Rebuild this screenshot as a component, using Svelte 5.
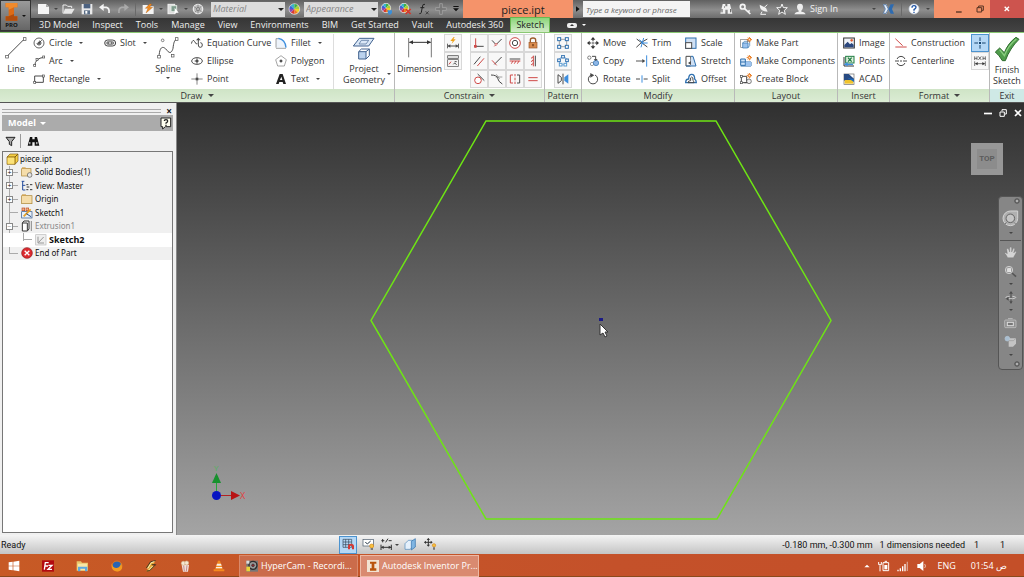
<script>
  // Every glyph is drawn on a grid of three units per pixel.
  const G = '#4a4a4a';
  const s = (d, c = G, w = 3) => `<path d="${d}" fill="none" stroke="${c}" stroke-width="${w}"/>`;
  const f = (d, c) => `<path d="${d}" fill="${c}"/>`;
  const box = (x, y, w, h, fill = '#fff', c = G, sw = 2) =>
    `<rect x="${x}" y="${y}" width="${w}" height="${h}" fill="${fill}" stroke="${c}" stroke-width="${sw}"/>`;
  const dot = (x, y, r, fill = '#fff', c = G, w = 2) =>
    `<circle cx="${x}" cy="${y}" r="${r}" fill="${fill}" stroke="${c}" stroke-width="${w}"/>`;
  const spark = (x, y) =>
    s(`M${x} ${y - 8}v16M${x - 8} ${y}h16M${x - 5} ${y - 5}l10 10M${x + 5} ${y - 5}l-10 10`, '#e8791c', 3) + dot(x, y, 3, '#fff', '#e8791c');
  const wheel = (x, y, r) => {
    const colors = ['#f0d020', '#ef7d1e', '#d83a32', '#8a4cb4', '#3b62d8', '#36b3c8', '#3fae49', '#a5cf3a'];
    return dot(x, y, r + 1, '#fff', '#ddd', 2) + colors.map((c, i) => {
      const a = (i * Math.PI) / 4, b = a + Math.PI / 4;
      return f(`M${x} ${y}L${x + r * Math.cos(a)} ${y + r * Math.sin(a)}A${r} ${r} 0 0 1 ${x + r * Math.cos(b)} ${y + r * Math.sin(b)}Z`, c);
    }).join('');
  };
  const R = '#cf4a48', B = '#2e6fae', L = '#cfe0f4';

  const icons = {
    line: [22, 22, s('M7 57L57 7', G, 3) + box(2, 55, 8, 8) + box(55, 2, 8, 8)],
    circle: [12, 12, dot(18, 18, 15, '#fff', '#666', 3) + s('M18 18l8-8M12 18a6 6 0 1 0 6-6') + dot(18, 18, 3, G)],
    arc: [12, 12, s('M5 32Q7 10 32 7', G, 3) + box(2, 28, 6, 6) + box(29, 3, 6, 6) + box(9, 10, 6, 6)],
    rect: [12, 12, s('M5 9h26v19H5z') + box(2, 25, 6, 6) + box(28, 6, 6, 6)],
    slot: [12, 12, `<rect x="2" y="9" width="33" height="18" rx="9" fill="#eee" stroke="${G}" stroke-width="3"/><rect x="8" y="14" width="21" height="8" rx="4" fill="#fff" stroke="${G}" stroke-width="2"/>` + f('M10 16h6v4h-6zM20 16h6v4h-6z', G)],
    spline: [22, 22, s('M6 60C8 18 24 32 30 40C40 54 46 42 48 34C50 16 52 12 58 6', G, 3) + box(2, 55, 8, 8) + box(55, 2, 8, 8) + dot(17, 10, 4) + box(43, 52, 8, 8)],
    equation: [12, 12, s('M1 20Q6 4 11 14T19 20M22 8v16q0 7 6 7t6-7q0-7-6-7') + f('M15 10l7-8 7 8z', G)],
    ellipse: [12, 12, `<ellipse cx="18" cy="18" rx="16" ry="10" fill="none" stroke="${G}" stroke-width="3"/>` + s('M18 10v16M11 18h12') + dot(18, 18, 3, G)],
    point: [12, 12, s('M18 1v34M1 18h34', G, 2) + f('M14 14h8v8h-8z', G)],
    fillet: [12, 12, f('M3 4h10q18 4 20 28H3z', '#eef4fb') + s('M3 32V5h8M3 34h30', '#777', 2) + s('M10 4Q31 7 33 32', '#3d8ede', 4)],
    polygon: [12, 12, s('M18 2l16 12-6 19H8L2 14z', '#777', 2) + s('M18 14v8M14 18h8') + dot(18, 18, 3, G)],
    text: [12, 12, f('M3 33L14 3h9l10 30h-8l-2-6H13l-2 6zM15 21h7l-3-10z', '#222')],
    project: [24, 24, f('M22 4h44L50 27H4z', '#dbe8f7') + s('M22 4h44L50 27H4z', '#42638f') + s('M28 10h22l-8 11H21z', '#42638f', 2) + f('M20 44h22v22H20z', '#bcd3ee') + s('M20 44l8-8h24v20l-10 10H20zM20 44h22v22M42 44l10-8', '#42638f')],
    dimension: [24, 22, s('M2 3v58M70 3v58', '#333', 2) + s('M4 16h64', '#333', 3) + f('M3 16l12-6v12zM69 16l-12-6v12z', '#333')],
    autodim: [12, 12, f('M20 0L10 12h7l-3 8 12-13h-7l4-7z', '#efa31b') + s('M1 20v14M35 20v14M3 27h30') + f('M2 27l8-5v10zM34 27l-8-5v10z', G)],
    showcons: [12, 12, box(2, 2, 32, 8, '#ddd') + box(2, 14, 32, 20, '#f4f4f4') + s('M12 20l-6 8', R) + s('M19 28l4-4 6 5M23 20l6 0') ],
    coincident: [12, 12, s('M8 4v28', R) + s('M8 28h24', G) + f('M3 24h8v8H3z', R)],
    collinear: [12, 12, s('M3 10l12 13L32 6') + s('M10 28l8-8', R) + dot(15, 22, 3, '#fff', R)],
    concentric: [12, 12, dot(18, 18, 16, '#fff', R, 3) + dot(18, 18, 8, '#fff', G, 3)],
    lock: [12, 12, s('M10 17V9q0-6 8-6t8 6v8', '#9b5a2a', 4) + box(6, 16, 24, 17, '#d98b4e', '#9b5a2a') + f('M16 21h4v7h-4z', '#6b3a15')],
    parallel: [12, 12, s('M3 28L22 5') + s('M13 33L33 10', R)],
    perpendicular: [12, 12, s('M10 28L32 6') + s('M3 16l14 15', R)],
    horizontal: [12, 12, s('M2 12h32') + s('M2 18h32M7 26l5-8M16 26l5-8M25 26l5-8', R)],
    vertical: [12, 12, s('M25 2v32') + s('M19 2v32M12 10l7-5M12 20l7-5M12 30l7-5', R)],
    tangent: [12, 12, dot(15, 22, 10, '#fff', R, 3) + s('M14 3l20 20')],
    smooth: [12, 12, s('M0 6Q18 6 20 16T34 33') + s('M14 12h20M16 4l10 14', '#777', 2)],
    symmetric: [12, 12, s('M12 6H4v24h8', R) + s('M18 3v7M18 14v8M18 26v7', R) + s('M24 6h8v24h-8')],
    equal: [12, 12, s('M4 14h28M4 23h28', R)],
    patrect: [12, 12, s('M7 7h22v22H7z', '#777', 2) + box(2, 2, 9, 9, '#fff', B, 3) + box(25, 2, 9, 9, '#fff', B, 3) + box(2, 25, 9, 9, '#fff', B, 3) + box(25, 25, 9, 9, '#fff', B, 3)],
    patcirc: [12, 12, dot(18, 18, 12, 'none', '#8db6e6', 3) + box(14, 1, 8, 8, '#fff', B, 3) + box(2, 12, 8, 8, '#fff', B, 3) + box(26, 12, 8, 8, '#fff', B, 3) + box(7, 25, 8, 8, '#fff', '#5b9bd0', 3) + box(21, 25, 8, 8, '#fff', '#5b9bd0', 3)],
    mirror: [12, 12, s('M3 5v26l10-8V13zM18 2v32', G) + f('M34 4v28l-12-9V13z', '#3d8ede')],
    move: [12, 12, s('M18 4v28M4 18h28', '#333') + f('M18 0l7 8H11zM18 36l7-8H11zM0 18l8-7v14zM36 18l-8-7v14z', '#333') + f('M13 13h10v10H13z', '#fff') + f('M16 16h4v4h-4z', '#333')],
    copy: [12, 12, dot(7, 8, 5, '#fff') + dot(15, 27, 5, '#fff', '#777') + dot(27, 24, 8, '#8db6e6', B) + s('M15 4h11v10') + f('M20 12h12l-6 6z', G)],
    rotate: [12, 12, s('M12 6A14 14 0 1 0 24 6') + f('M10 0l12 7-12 7z', G)],
    trim: [12, 12, s('M1 31L18 15l16-9M2 6l32 24') + s('M23 3l-8 28M10 8l14 12', '#3d8ede') + s('M15 18h20', '#3d8ede')],
    extend: [12, 12, s('M0 18h22', '#555') + f('M19 12l9 6-9 6z', G) + s('M32 1v34', '#3d8ede')],
    split: [12, 12, s('M0 18h12M23 18h12') + s('M18 7v22', '#3d8ede')],
    scale: [12, 12, box(2, 3, 31, 31, L, B, 3) + box(2, 17, 18, 17, '#fff', G, 3)],
    stretch: [12, 12, s('M3 4h14v29H3z', G) + f('M18 4h6l9 29H15z', L) + s('M18 4h6l9 29H3', B) + f('M9 24l9-6v12z', G)],
    offset: [12, 12, s('M2 29q0-11 9-11Q11 4 20 4t9 14q5 3 5 11z', B, 4) + s('M9 29q0-6 8-6-2-11 3-11t4 11q3 1 3 6z', G)],
    part: [12, 12, box(2, 7, 20, 24, '#fff', '#777') + f('M8 17h17v16H8z', '#9cc3ef') + s('M8 18l5-5h16v13l-6 7H8zM8 18h16v14', B, 2) + spark(28, 8)],
    components: [12, 12, f('M2 12h14v18H2z', '#cfe4f9') + s('M2 12h14v19H2zM2 21h31v12H2M17 21v12', B) + f('M17 21h16v12H17z', '#9cc3ef') + spark(28, 8)],
    block: [12, 12, s('M4 10h16v19H4z') + box(1, 26, 6, 6) + box(1, 7, 6, 6) + dot(27, 25, 7, '#eee') + s('M13 29h9') + spark(28, 8)],
    image: [12, 12, box(2, 3, 32, 30, '#eef2f8', '#333', 3) + f('M4 31V24l10-10 7 8 5-4 6 5v8z', '#2b477e') + dot(26, 10, 3, '#e05b2f', '#e05b2f')],
    points: [12, 12, box(8, 4, 25, 20, '#dff0dd', '#1f7d43', 3) + s('M15 8l11 12M26 8L15 20', '#1f7d43', 4) + s('M3 6v27h30', '#333') + f('M2 28l12-6v4h16v4H14v4z', '#3d8ede')],
    acad: [12, 12, box(3, 3, 30, 31, '#fff', '#666') + f('M3 3h14l16 14v6H3z', '#274a82') + f('M5 21h26v11H5z', '#f0c32c') + f('M13 14l20 5v8z', '#1d6bbb')],
    construction: [12, 12, s('M1 5l22 21M1 30h34', R) ],
    centerline: [12, 12, s('M6 12A13 13 0 0 1 30 12M6 24a13 13 0 0 0 24 0M0 18h12M15 18h6M24 18h12')],
    centerpoint: [12, 12, s('M18 1v11M18 24v11M1 18h11M24 18h11', '#17456f') + f('M15 15h6v6h-6z', '#17456f')],
    driven: [12, 12, s('M2 4v11M9 4v11M2 10h7M13 4l9 11M22 4l-9 11M27 4v11M34 4v11M27 10h7', '#333', 2) + s('M2 19v14M34 19v14M4 26h28', '#333', 2) + f('M3 26l8-5v10zM33 26l-8-5v10z', '#333')],
    finish: [26, 26, '<path d="M4 48L17 36L31 50Q43 20 66 4L75 10Q48 36 34 74H25Q16 58 4 48z" fill="#4f9c4b" stroke="#2d6a2c" stroke-width="3"/><path d="M17 41L31 59Q43 28 67 9" fill="none" stroke="#8bcf80" stroke-width="4"/>'],
    // title bar
    inv: [13, 18, f('M2 0h35v13H27v27h10v13H2V40h9V13H2z', '#dd6b16') + f('M2 0h35v13H27L11 20v-7H2z', '#f08a2c') + f('M11 40L27 33v7h10v13H2V40z', '#b14d0e')],
    newfile: [13, 12, '<path d="M3 3h24l9 9v21H3z" fill="#f4f4f4"/><path d="M27 3v9h9z" fill="#aaa"/>'],
    open: [13, 12, s('M3 31V6h10l4 4h12v5', '#eee') + f('M9 17h29l-9 15H3z', '#e6e6e6')],
    save: [12, 12, f('M2 3h32v31H2z', '#e9e9e9') + f('M8 3h20v13H8z', '#4d6280') + f('M9 22h18v12H9z', '#596d86') + f('M13 24h6v8h-6z', '#fff')],
    undo: [12, 12, s('M7 13h15q10 2 8 17', '#f4f4f4', 5) + f('M0 13L14 2v22z', '#f4f4f4')],
    redo: [12, 12, s('M29 13H14Q4 15 6 30', '#aaa', 5) + f('M36 13L22 2v22z', '#aaa')],
    update: [13, 12, f('M2 6h14l4 4h15v23H2z', '#f4f4f4') + f('M24 2L10 16h8l-6 14 20-17h-9l6-9z', '#ee8a20') + s('M24 2L10 16h8l-6 14 20-17h-9l6-9z', '#a85410', 1)],
    selectf: [13, 12, box(3, 4, 20, 28, '#ddd', '#f1f1f1', 3) + box(12, 8, 17, 18, '#7e9c8c', '#dfe8e2', 3) + f('M23 14v20l5-5 7 0z', '#fff')],
    adjust: [12, 12, dot(18, 18, 14, '#bbb', '#e9e9e9', 4) + s('M6 11l23 15M29 9L8 28M18 4v28', '#777', 2) + dot(18, 18, 4, '#eee')],
    wheel: [13, 12, wheel(19, 18, 15)],
    wheelpick: [13, 12, wheel(15, 15, 13) + f('M19 22h14v8l-5 5h-5z', '#3a8ed8')],
    wheelx: [13, 12, wheel(15, 15, 13) + s('M20 18l15 15M35 18L20 33', '#d5382d', 5)],
    fx: [12, 12, s('M21 4q-7-3-8 8l-3 16q-1 5-6 4M7 14h12', '#222', 3) + s('M23 25l9 9M32 25l-9 9', '#222', 2)],
    plus: [12, 12, f('M14 2h8v12h12v8H22v12h-8V22H2v-8h12z', '#777') + s('M14 2h8v12h12v8H22v12h-8V22H2v-8h12z', '#aaa', 2)],
    menu: [8, 12, f('M4 9h16v3H4zM3 16h18l-9 9z', '#111')],
    tri: [6, 12, f('M3 10v16l11-8z', '#111')],
    binoc: [13, 12, f('M8 3h8v7h6V3h8l7 29H23V20h-7v12H1z', '#f0f0f0') + s('M6 18v10M32 18v10M12 12h3', '#555', 3)],
    key: [13, 12, dot(11, 11, 7, '#888', '#f4f4f4', 5) + s('M16 16l18 17M27 27l5-5', '#f4f4f4', 5)],
    dish: [12, 12, f('M5 5q0 21 24 21L24 15z', '#f0f0f0') + s('M16 16l12-11M12 26L8 34h16', '#f0f0f0')],
    star: [12, 12, '<path d="M18 3l4 11h12l-9 8 3 12-10-7-10 7 3-12-9-8h12z" fill="#666" stroke="#f5f5f5" stroke-width="3"/>'],
    person: [12, 12, f('M9 12q0-10 9-10t9 10q0 6-5 11v3q11 1 13 8H1q2-7 13-8v-3q-5-5-5-11z', '#eee')],
    exchange: [13, 12, f('M3 4h10l7 14-7 14H3l6-14z', '#e9f0f8') + f('M36 4H26l-7 14 7 14h10l-6-14z', '#2d6bb1') + s('M4 5h8l7 13-7 13H4l6-13z', '#2d5a95', 2)],
    help: [12, 12, dot(18, 18, 15, '#fff', '#c9d3e4', 2) + s('M12 14q0-6 6-6t6 5q0 3-6 7v3', '#2155a5', 4) + f('M16 26h4v4h-4z', '#2155a5')],
    min: [8, 12, f('M3 25h17v4H3z', '#553322')],
    restore: [8, 12, s('M3 14h14v13H3zM8 14V9h14v13h-5', '#553322', 3)],
    close: [10, 12, s('M8 11l13 13M21 11L8 24', '#fff', 4)],
    min2: [10, 10, f('M3 14h24v5H3z', '#fff')],
    restore2: [10, 10, s('M6 12h13v13H6zM12 10V5h13v13h-4', '#fff', 3)],
    close2: [10, 10, s('M6 6l18 18M24 6L6 24', '#fff', 5)],
    // browser
    funnel: [11, 11, '<path d="M3 4h27L20 17v12l-7-4v-8z" fill="#aaa" stroke="#222" stroke-width="3"/>'],
    binocdark: [13, 11, f('M9 3h7v7h7V3h7l7 26H23V19h-7v10H2z', '#111') + f('M7 18h3v7H7zM28 18h3v7h-3z', '#eee')],
    helpsq: [12, 13, `<path d="M3 3h29v26H16l-8 7v-7H3z" fill="#fffff0" stroke="#222" stroke-width="3"/>` + s('M13 12q0-4 5-4t5 4-5 6v2', '#222', 4) + f('M16 23h4v4h-4z', '#222')],
    cube: [13, 12, '<path d="M3 12L12 3h24v21l-9 10H3z" fill="#f6d044" stroke="#7e5a12" stroke-width="2"/>' + s('M3 12h24v22M27 12l9-9', '#7e5a12') + f('M5 14h20v18H5z', '#fbe27a')],
    bodies: [12, 12, box(2, 8, 28, 22, '#f5ddaa', '#a8812f') + f('M3 4h11v5H3z', '#cfa455') + dot(26, 27, 7, '#e5e5e5', '#555')],
    view: [12, 12, s('M2 4h8M5 4v26h8M5 16h8', '#234b9c', 3) + s('M16 14h6M16 29h6M27 14h7M27 29h7M17 21h8', '#333', 3)],
    folder: [12, 12, box(2, 8, 31, 24, '#f5ddaa', '#a8812f') + f('M3 4h12v5H3z', '#cfa455')],
    sketch: [12, 12, box(2, 14, 31, 19, '#e8f0fa', '#284f86') + box(3, 3, 8, 8, '#f3b08d', '#bd4b1c') + box(15, 3, 8, 8, '#f3b08d', '#bd4b1c') + s('M8 28L29 7', '#e8a020', 5) + s('M16 20l14 9', '#284f86')],
    extrusion: [12, 12, '<path d="M4 9l5-6h15v24l-5 6H4z" fill="#fff" stroke="#333" stroke-width="3"/>' + s('M4 9h15v23', '#333') + s('M31 3v30', '#555', 2)],
    sketch2: [12, 12, box(2, 2, 31, 31, '#eee', '#bbb') + s('M9 8v19h18M10 26L26 9', '#999')],
    stop: [12, 12, dot(18, 18, 16, '#dc2a2f', '#8f1519', 2) + s('M11 11l14 14M25 11L11 25', '#fff', 4)],
    // navigation bar
    smallx: [6, 6, dot(9, 9, 7, '#777', '#444', 2) + s('M6 6l6 6M12 6l-6 6', '#ccc', 2)],
    nwheel: [17, 17, '<path d="M25 3h22v22A22 22 0 1 1 25 3z" fill="#b0b0b0" stroke="#d4d4d4" stroke-width="3"/>' + dot(25, 25, 13, '#aaa', '#6c6c6c', 3) + dot(25, 25, 9, '#c4c4c4', '#d0d0d0', 2) + s('M14 37l-5 5M36 37l5 5', '#777')],
    hand: [13, 13, '<path d="M11 35Q6 25 2 22q1-4 8 1L8 9q3-4 6 1l3 8V5q4-4 6 0v13l5-11q5-1 4 3l-3 11 5-5q5 0 2 5L28 35z" fill="#d4d4d4" stroke="#707070" stroke-width="1"/>'],
    zoom: [13, 13, dot(15, 15, 11, '#999', '#ccc', 3) + box(11, 11, 9, 9, '#ddd', '#eee') + s('M24 24l12 11', '#555', 5)],
    orbit: [13, 13, s('M21 4v31', '#4d4d4d', 3) + s('M8 23Q0 17 17 16M25 16q14 1 9 5-4 3-24 2', '#ccc', 3) + f('M21 0l6 8H15zM21 39l5-8H16zM5 23l9-6v12z', '#4d4d4d')],
    lookat: [13, 13, `<rect x="2" y="9" width="34" height="23" rx="3" fill="#909090" stroke="#ccc" stroke-width="2"/>` + box(10, 16, 18, 10, '#777', '#ddd', 3) + s('M12 5h14', '#bbb')],
    face: [13, 13, f('M14 10h22v16l-9 9H14z', '#c4c4c4') + dot(10, 11, 7, '#a9bed0', '#b5c9da') + s('M14 17h14l8-7', '#999', 2)],
    // status bar
    snapgrid: [13, 13, s('M3 4h26v24H3zM3 12h26M3 20h26M11 4v24M20 4v24', '#345', 2) + s('M21 34V25q0-5 6-5t6 5v9', '#d33a36', 6)],
    dimdisp: [13, 13, box(3, 4, 31, 20, '#fff', '#456') + s('M10 12l6 6 10-9', '#234', 3) + dot(29, 24, 6, '#f7c23c', '#d6861d') + f('M26 30h7v6h-7z', '#777')],
    relax: [13, 13, s('M3 20v16M34 20v16M4 28h30', '#333') + s('M4 8h9M8 3v10M17 13l7-11M26 8h9', '#333') + f('M3 28l8-5v10zM34 28l-8-5v10z', '#333')],
    slice: [13, 13, '<path d="M3 17L13 7h13v20l-8 7H3z" fill="#e5f0fb" stroke="#4b87b9" stroke-width="2"/><path d="M22 10L34 2v25l-12 9z" fill="#80b5e2" stroke="#2c6ca8" stroke-width="2"/>'],
    dof: [13, 13, s('M13 2v22M2 13h22', '#333') + f('M13 0l5 6H8zM13 26l5-6H8zM0 13l6-5v10zM26 13l-6-5v10z', '#333') + dot(30, 22, 5, '#f7c23c', '#d6861d') + f('M27 28h6v7h-6z', '#777')],
    // taskbar
    win: [12, 12, f('M2 7l12-2v12H2zM16 5l18-3v15H16zM2 19h12v12L2 29zM16 19h18v15l-18-3z', '#fff')],
    fz: [12, 12, f('M0 1h36v34H0z', '#b30b10') + s('M7 29l3-21h10M9 18h9M19 16h11L18 28h12', '#fff', 4)],
    explorer: [13, 12, f('M2 4h13l3 4h18v24H2z', '#e9c66b') + f('M5 11h28v20H5z', '#f8e7a5') + f('M6 20h28v14h-7v-8H13v8H6z', '#5ea9df')],
    firefox: [12, 12, dot(18, 18, 15, '#2964b4', '#e77919', 3) + f('M2 10q2 14 15 14 9-1 9-5 3-3 4-10 9 20-7 25Q-1 36 2 10z', '#f39b22')],
    winamp: [12, 12, f('M3 25L17 5l15-3L21 20l9-2L13 34H3l8-10z', '#e5a82c') + s('M4 24L17 5l15-3M5 33l9-1 18-18H20', '#3d3624', 3) + s('M8 26L19 8l9-3M11 30l12-12', '#f7ecc4', 3)],
    popcorn: [12, 12, f('M8 15h22l-3 20H12z', '#efe1dc') + s('M14 16l2 18M24 16l-2 18', '#c98b85', 3) + dot(13, 10, 6, '#f5e9d2', '#d7b993') + dot(23, 9, 6, '#f5e9d2', '#d7b993')],
    vlc: [12, 12, f('M15 2h6l8 25H7zM2 28h32v6H2z', '#f58a1e') + f('M12 11h12l2 6H10zM9 21h18l1 4H8z', '#f5efe8')],
    hyper: [12, 12, f('M1 2h35v33H1z', '#777') + dot(21, 16, 12, '#999', '#2d2d2d', 4) + dot(21, 16, 4, '#8d2830', '#333') + f('M1 20h11v14H1z', '#ead33b') + f('M1 2h9v9H1z', '#ddd')],
    invapp: [12, 12, f('M0 0h36v36H0z', '#f2e3d2') + f('M9 5h19v6h-6v14h6v7H9v-7h5V11H9z', '#b9540b')],
    up: [8, 12, f('M4 22h16l-8-8z', '#fff')],
    power: [12, 12, s('M15 8h17v24H15zM20 4h7', '#fff', 3) + f('M19 15h9v13h-9z', '#fff') + s('M6 16v18M2 6v8h8V6', '#fff', 3)],
    signal: [12, 12, f('M1 29h4v5H1zM8 25h4v9H8zM15 19h4v15h-4zM22 12h4v22h-4z', '#fff') + s('M31 5v28', '#d9a28f', 4)],
    sound: [12, 12, f('M4 12h7l11-9v30l-11-9H4z', '#fff') + s('M26 12q5 6 0 12', '#e6bfb0', 3)]
  };

  const tabs = ['3D Model', 'Inspect', 'Tools', 'Manage', 'View', 'Environments', 'BIM', 'Get Started', 'Vault', 'Autodesk 360', 'Sketch'];
  const shapes = [['circle', 'Circle', 1], ['arc', 'Arc', 1], ['rect', 'Rectangle', 1]];
  const curves = [['equation', 'Equation Curve'], ['ellipse', 'Ellipse'], ['point', 'Point']];
  const extras = [['fillet', 'Fillet', 1], ['polygon', 'Polygon'], ['text', 'Text', 1]];
  const constraints = ['coincident', 'collinear', 'concentric', 'lock', 'parallel', 'perpendicular', 'horizontal', 'vertical', 'tangent', 'smooth', 'symmetric', 'equal'];
  const modify = [
    [['move', 'Move'], ['copy', 'Copy'], ['rotate', 'Rotate']],
    [['trim', 'Trim'], ['extend', 'Extend'], ['split', 'Split']],
    [['scale', 'Scale'], ['stretch', 'Stretch'], ['offset', 'Offset']]
  ];
  const layout = [['part', 'Make Part'], ['components', 'Make Components'], ['block', 'Create Block']];
  const insert = [['image', 'Image'], ['points', 'Points'], ['acad', 'ACAD']];
  const tree = [
    { icon: 'cube', text: 'piece.ipt', root: true },
    { icon: 'bodies', text: 'Solid Bodies(1)', mark: '+' },
    { icon: 'view', text: 'View: Master', mark: '+' },
    { icon: 'folder', text: 'Origin', mark: '+' },
    { icon: 'sketch', text: 'Sketch1' },
    { icon: 'extrusion', text: 'Extrusion1', mark: '-', dim: true },
    { icon: 'sketch2', text: 'Sketch2', child: true },
    { icon: 'stop', text: 'End of Part', last: true }
  ];
  const pinned = ['win', 'fz', 'explorer', 'firefox', 'winamp', 'popcorn', 'vlc'];
</script>

{#snippet icon(name)}
  <svg class="icon" width={icons[name][0]} height={icons[name][1]} viewBox="0 0 {icons[name][0] * 3} {icons[name][1] * 3}" aria-hidden="true">{@html icons[name][2]}</svg>
{/snippet}

{#snippet column(items, cls)}
  <div class="col {cls}">
    {#each items as [name, label, drop]}
      <button class="cmd">{@render icon(name)}<span>{label}</span>{#if drop}<i class="drop"></i>{/if}</button>
    {/each}
  </div>
{/snippet}

<div class="window">
  <header>
    <button class="app" aria-label="Application menu">
      <span>{@render icon('inv')}<b>PRO</b></span><i class="drop dark"></i>
    </button>
    <div class="head">
      <div class="title">
        <div class="quick">
          <button aria-label="New">{@render icon('newfile')}</button><i class="drop"></i>
          <button aria-label="Open">{@render icon('open')}</button>
          <button aria-label="Save">{@render icon('save')}</button>
          <button aria-label="Undo">{@render icon('undo')}</button>
          <button aria-label="Redo">{@render icon('redo')}</button>
          <i class="bar"></i>
          <button aria-label="Update">{@render icon('update')}</button><i class="drop"></i>
          <button aria-label="Select">{@render icon('selectf')}</button><i class="drop"></i>
          <button aria-label="Adjust">{@render icon('adjust')}</button>
        </div>
        <span class="pick"><select aria-label="Material"><option>Material</option></select></span>
        <button aria-label="Color">{@render icon('wheel')}</button>
        <span class="pick"><select aria-label="Appearance"><option>Appearance</option></select></span>
        <div class="tools">
          <button aria-label="Adjust appearance">{@render icon('wheelpick')}</button>
          <button aria-label="Clear appearance">{@render icon('wheelx')}</button>
          <button aria-label="Parameters">{@render icon('fx')}</button>
          <button aria-label="Add">{@render icon('plus')}</button>
          <button aria-label="Customize">{@render icon('menu')}</button>
        </div>
        <div class="doc">piece.ipt</div>
        <button class="expand" aria-label="Expand">{@render icon('tri')}</button>
        <input type="text" placeholder="Type a keyword or phrase" aria-label="Search" />
        <div class="info">
          <button aria-label="Find">{@render icon('binoc')}</button>
          <button aria-label="Subscription">{@render icon('key')}</button>
          <button aria-label="Communication">{@render icon('dish')}</button>
          <button aria-label="Favorites">{@render icon('star')}</button>
          <button class="sign">{@render icon('person')}Sign In</button>
        </div>
        <div class="support">
          <i class="drop"></i>
          <button aria-label="Exchange">{@render icon('exchange')}</button>
          <i class="bar"></i>
          <button aria-label="Help">{@render icon('help')}</button><i class="drop"></i>
        </div>
        <div class="sys">
          <button aria-label="Minimize">{@render icon('min')}</button>
          <button aria-label="Restore">{@render icon('restore')}</button>
          <button class="red" aria-label="Close">{@render icon('close')}</button>
        </div>
      </div>
      <nav class="tabs">
        {#each tabs as t}<button class:on={t === 'Sketch'}>{t}</button>{/each}
        <button class="fold" aria-label="Collapse ribbon"><i></i></button><i class="drop light"></i>
      </nav>
    </div>
  </header>

  <div class="ribbon">
    <section>
      <div class="body">
        <button class="big wline">{@render icon('line')}<span>Line</span></button>
        {@render column(shapes, 'w71')}
        {@render column([['slot', 'Slot', 1]], 'w51')}
        <button class="big wspline">{@render icon('spline')}<span>Spline</span><i class="drop"></i></button>
        {@render column(curves, 'w84')}
        {@render column(extras, 'w58')}
        <button class="big wproj">{@render icon('project')}<span>Project<br />Geometry</span><i class="drop side"></i></button>
      </div>
      <h2>Draw<i class="drop wide"></i></h2>
    </section>
    <section>
      <div class="body">
        <button class="big wdim">{@render icon('dimension')}<span>Dimension</span></button>
        <div class="tiles one">
          <button class="tile" aria-label="Automatic dimension">{@render icon('autodim')}</button>
          <button class="tile" aria-label="Show constraints">{@render icon('showcons')}</button>
        </div>
        <div class="tiles four">
          {#each constraints as c}<button class="tile" aria-label={c}>{@render icon(c)}</button>{/each}
        </div>
      </div>
      <h2>Constrain<i class="drop wide"></i></h2>
    </section>
    <section>
      <div class="body mid">
        <div class="tiles">
          {#each ['patrect', 'patcirc', 'mirror'] as p}<button class="tile" aria-label={p}>{@render icon(p)}</button>{/each}
        </div>
      </div>
      <h2>Pattern</h2>
    </section>
    <section>
      <div class="body pad">
        {#each modify as m}{@render column(m, 'w49')}{/each}
      </div>
      <h2>Modify</h2>
    </section>
    <section>
      <div class="body pad">{@render column(layout, '')}</div>
      <h2>Layout</h2>
    </section>
    <section>
      <div class="body pad">{@render column(insert, '')}</div>
      <h2>Insert</h2>
    </section>
    <section>
      <div class="body pad">
        {@render column([['construction', 'Construction'], ['centerline', 'Centerline']], 'grow')}
        <div class="tiles">
          <button class="tile active" aria-label="Center point">{@render icon('centerpoint')}</button>
          <button class="tile" aria-label="Driven dimension">{@render icon('driven')}</button>
        </div>
      </div>
      <h2>Format<i class="drop wide"></i></h2>
    </section>
    <section class="exit">
      <div class="body mid">
        <button class="big">{@render icon('finish')}<span>Finish<br />Sketch</span></button>
      </div>
      <h2>Exit</h2>
    </section>
  </div>

  <main>
    <aside>
      <div class="grip"><i></i><button aria-label="Close browser">×</button></div>
      <div class="model"><span>Model<i class="drop light wide"></i></span><button aria-label="Help">{@render icon('helpsq')}</button></div>
      <div class="filter">
        <button aria-label="Filter">{@render icon('funnel')}</button><i></i>
        <button aria-label="Find">{@render icon('binocdark')}</button>
      </div>
      <div class="treebox">
        <ul>
          {#each tree as n}
            <li class:root={n.root} class:child={n.child} class:dim={n.dim} class:last={n.last}>
              {#if !n.root}<span class="branch">{#if n.mark}<button class="mark" aria-label="Toggle {n.text}">{n.mark === '+' ? '+' : '−'}</button>{/if}</span>{/if}
              {@render icon(n.icon)}<span>{n.text}</span>
            </li>
          {/each}
        </ul>
      </div>
    </aside>

    <div class="canvas">
      <svg class="scene" viewBox="0 0 847 432" aria-hidden="true">
        <path d="M309 17.500H539L654 217L540 415.500H309L194 217Z" transform="translate(0 0.500)" fill="none" stroke="#6ee514" stroke-width="1.500" />
        <rect x="422" y="215" width="4" height="3" fill="#1b1b86" />
        <path d="M423 221v11l3-2 2 4 2-1-2-4h3z" fill="#fff" stroke="#333" stroke-width="1" />
        <path d="M39.500 393V379" stroke="#25a53a" stroke-width="1" />
        <path d="M35 380l4.500-10 4.500 10z" fill="#17912e" />
        <path d="M39 392.500H55" stroke="#b32020" stroke-width="1" />
        <path d="M54 388v9l9-4.500z" fill="#b81414" />
        <circle cx="39.500" cy="392.500" r="4.500" fill="#0815c2" />
        <text x="37" y="368" fill="#4fb45a" font-size="8">Y</text>
        <text x="63" y="396" fill="#e03e3e" font-size="9">X</text>
      </svg>
      <div class="docsys">
        <button aria-label="Minimize document">{@render icon('min2')}</button>
        <button aria-label="Restore document">{@render icon('restore2')}</button>
        <button aria-label="Close document">{@render icon('close2')}</button>
      </div>
      <button class="viewcube"><span>TOP</span></button>
      <div class="navbar">
        <button class="end" aria-label="Close bar">{@render icon('smallx')}</button>
        <button aria-label="Wheel">{@render icon('nwheel')}</button><i class="drop"></i>
        <hr />
        <button aria-label="Pan">{@render icon('hand')}</button>
        <button aria-label="Zoom">{@render icon('zoom')}</button><i class="drop"></i>
        <button aria-label="Orbit">{@render icon('orbit')}</button><i class="drop"></i>
        <button aria-label="Look at">{@render icon('lookat')}</button>
        <button aria-label="View face">{@render icon('face')}</button><i class="drop"></i>
        <button class="end" aria-label="Options">{@render icon('smallx')}</button>
      </div>
    </div>
  </main>

  <div class="status">
    <span class="ready">Ready</span>
    <div class="toggles">
      <button class="active" aria-label="Snap to grid">{@render icon('snapgrid')}</button>
      <button aria-label="Dimension display">{@render icon('dimdisp')}</button>
      <button class="tight" aria-label="Relax mode">{@render icon('relax')}</button><i class="drop"></i>
      <button aria-label="Slice graphics">{@render icon('slice')}</button>
      <button aria-label="Degrees of freedom">{@render icon('dof')}</button>
    </div>
    <span class="coords">-0.180 mm, -0.300 mm</span>
    <span class="need">1 dimensions needed</span>
    <span class="num">1</span>
    <span class="num">1</span>
  </div>

  <footer>
    <div class="pinned">
      {#each pinned as p}<button aria-label={p}>{@render icon(p)}</button>{/each}
    </div>
    <button class="task">{@render icon('hyper')}<span>HyperCam - Recordi...</span></button>
    <button class="task front">{@render icon('invapp')}<span>Autodesk Inventor Pr...</span></button>
    <div class="tray">
      <button aria-label="Hidden icons">{@render icon('up')}</button>
      <button aria-label="Power">{@render icon('power')}</button>
      <button aria-label="Network">{@render icon('signal')}</button>
      <button aria-label="Volume">{@render icon('sound')}</button>
      <span class="lang">ENG</span>
      <span class="clock" dir="ltr">01:54 ص</span>
    </div>
  </footer>
</div>

<style>
  :global(body) { margin: 0; }
  .window { min-height: 100vh; display: flex; flex-direction: column; font: 9px/12px "Open Sans", "Noto Sans", sans-serif; color: #333; background: #3f3f3f; overflow: hidden; }
  button, input, select { font: inherit; color: inherit; margin: 0; padding: 0; border: 0; background: none; }
  button { display: flex; align-items: center; justify-content: center; white-space: nowrap; }
  .icon { display: block; flex: none; }
  .drop { flex: none; width: 0; height: 0; border: 2px solid transparent; border-top-color: #444; border-bottom: 0; }
  .drop.wide { border-width: 3px; border-bottom: 0; }
  .drop.light { border-top-color: #fff; }
  .drop.dark { border-top-color: #111; }

  header { display: flex; height: 32px; }
  .app { width: 31px; height: 31px; box-sizing: border-box; border: 1px solid #333; background: linear-gradient(#9a9a9a, #666); gap: 4px; }
  .app span { display: flex; flex-direction: column; align-items: center; }
  .app b { font-size: 6px; line-height: 8px; color: #111; }
  .head { flex: 1; min-width: 0; display: flex; flex-direction: column; }
  .title { display: flex; align-items: center; height: 18px; background: linear-gradient(#606060, #8e8e8e 55%, #6c6c6c); }
  .quick { display: flex; align-items: center; gap: 6px; width: 180px; padding-left: 6px; box-sizing: border-box; }
  .quick .drop { margin: 0 -2px; }
  .bar { width: 1px; height: 13px; background: #6a6a6a; }
  .pick { position: relative; width: 74px; height: 15px; background: #dcdcdc; }
  .pick select { display: block; width: 100%; height: 15px; padding-left: 2px; appearance: none; font-style: italic; color: #858585; }
  .pick::after { content: ""; position: absolute; right: 1px; top: 6px; border: 3px solid transparent; border-top-color: #222; border-bottom: 0; pointer-events: none; }
  .title > button { width: 19px; }
  .tools { display: flex; justify-content: space-between; width: 79px; padding: 0 3px; }
  .doc { width: 110px; height: 18px; box-sizing: border-box; padding-left: 10px; font-size: 11px; line-height: 19px; text-align: center; color: #222; background: #f5936a; }
  .title > .expand { width: 10px; }
  .title input { width: 107px; height: 16px; box-sizing: border-box; padding: 0 3px; background: #f4f4f4; font-size: 8px; font-style: italic; }
  .title input::placeholder { color: #666; opacity: 1; }
  .info { display: flex; gap: 6px; margin-left: 30px; }
  .sign { gap: 4px; color: #f2f2f2; }
  .support { display: flex; align-items: center; gap: 6px; margin-left: auto; padding-right: 4px; }
  .sys { display: flex; justify-content: flex-end; width: 90px; height: 18px; background: #f5936a; }
  .sys button { width: 21px; }
  .sys .red { width: 34px; background: #cd544e; }
  .tabs { display: flex; align-items: center; gap: 13px; height: 14px; padding-left: 8px; background: linear-gradient(#363636, #444); color: #eee; }
  .tabs button { height: 14px; }
  .tabs .on { color: #222; background: linear-gradient(#8bd67a, #d3ecc8); outline: 1px solid #69b850; padding: 0 5px; margin: 0 -5px; }
  .tabs .fold { padding-left: 10px; margin-right: -8px; }
  .fold i { width: 10px; height: 5px; border-radius: 2px; background: #eee; display: grid; place-items: center; }
  .fold i::after { content: ""; border: 2px solid transparent; border-bottom-color: #333; border-top: 0; }

  .ribbon { display: grid; grid-template-columns: 395fr 150fr 37fr 153fr 103fr 52fr 100fr 34fr; height: 71px; border-top: 1px solid #8ac873; border-bottom: 1px solid #555; background: #fff; box-sizing: border-box; }
  section { display: flex; flex-direction: column; min-width: 0; border-right: 1px solid #b9b9b9; }
  .exit { border: 0; }
  .body { display: flex; flex: 1; padding-top: 1px; }
  .mid { justify-content: center; }
  .pad { padding-left: 5px; }
  h2 { display: flex; align-items: center; justify-content: center; gap: 5px; margin: 0; height: 13px; font-size: 9px; font-weight: 400; background: linear-gradient(#cfe4c6, #dbecd4); }
  .exit h2 { background: #cfe9e6; }
  .col { display: flex; flex-direction: column; }
  .cmd { height: 18px; justify-content: flex-start; gap: 4px; }
  .cmd .drop { margin-left: 3px; }
  .w71 { width: 71px; } .w51 { width: 51px; } .w84 { width: 84px; } .w58 { width: 58px; border-right: 1px solid #ddd; } .w49 { width: 49px; }
  .grow { flex: 1; min-width: 0; }
  .big { flex-direction: column; justify-content: flex-start; padding-top: 3px; height: 54px; line-height: 11px; gap: 4px; }
  .big .drop { margin-top: -1px; }
  .wline { width: 32px; margin-right: 1px; } .wspline { width: 28px; margin-right: 9px; margin-left: -1px; } .wproj { flex: 1; gap: 2px; position: relative; }
  .wproj .side { position: absolute; right: 3px; bottom: 13px; }
  .wdim { width: 49px; }
  .exit .big { padding-top: 2px; gap: 2px; }
  .tiles { display: grid; align-content: start; }
  .four { grid-template-columns: repeat(4, 18px); margin-left: 8px; }
  .tile { width: 18px; height: 18px; box-sizing: border-box; border: 1px solid #d8d8d8; background: #f8f8f8; }
  .active { border: 1px solid #4c93cf; background: #b5d8f6; }

  main { flex: 1; display: flex; min-height: 0; }
  aside { width: 177px; flex: none; box-sizing: border-box; padding: 3px 3px 2px 2px; display: flex; flex-direction: column; background: #f0f0f0; border-right: 1px solid #888; }
  .grip { display: flex; align-items: center; gap: 4px; height: 9px; }
  .grip i { flex: 1; height: 2px; border: 1px solid #aaa; border-width: 1px 0; }
  .grip button { width: 8px; height: 8px; font-size: 10px; line-height: 8px; font-weight: 700; color: #111; }
  .model { display: flex; align-items: center; justify-content: space-between; height: 16px; padding: 0 1px 0 6px; background: #ababab; color: #fff; font: 700 9px/12px "Noto Sans", sans-serif; }
  .model span { display: flex; align-items: center; gap: 4px; }
  .filter { display: flex; align-items: center; gap: 4px; height: 20px; padding-left: 3px; }
  .filter i { width: 1px; height: 14px; background: #999; margin-right: 2px; }
  .treebox { flex: 1; border: 1px solid #777; background: #fff; box-sizing: border-box; }
  ul { list-style: none; margin: 0; padding: 0; height: 108px; display: flex; flex-direction: column; font: 8px/12px "Noto Sans", sans-serif; color: #111; }
  li { flex: 1; min-height: 0; display: flex; align-items: center; gap: 2px; padding-left: 3px; background: #f0f0f0; }
  .root { gap: 1px; }
  .child { background: #fff; font-weight: 700; font-size: 9px; padding-left: 17px; }
  .dim { color: #888; }
  .branch { position: relative; width: 13px; align-self: stretch; display: flex; align-items: center; }
  .branch::before { content: ""; position: absolute; left: 3px; top: 0; bottom: 0; width: 1px; background: #aaa; }
  .last .branch::before { bottom: 6px; }
  .branch::after { content: ""; position: absolute; left: 3px; right: 1px; top: 6px; height: 1px; background: #aaa; }
  .child .branch::before { bottom: 6px; }
  .mark { position: relative; z-index: 1; width: 7px; height: 7px; box-sizing: border-box; border: 1px solid #888; background: #fff; font-size: 7px; line-height: 5px; }

  .canvas { position: relative; flex: 1; min-width: 0; background: linear-gradient(#303030, #a4a4a4); }
  .scene { display: block; width: 100%; height: 100%; position: absolute; font-family: "Open Sans", sans-serif; }
  .docsys { position: absolute; right: 1px; top: 5px; display: flex; gap: 5px; }
  .viewcube { position: absolute; right: 21px; top: 40px; width: 32px; height: 32px; background: #979797; color: #5c5c5c; font: 700 8px/12px Roboto, sans-serif; }
  .viewcube span { padding: 4px 2px; background: #8c8c8c; }
  .navbar { position: absolute; right: 1px; top: 93px; width: 25px; height: 174px; box-sizing: border-box; display: flex; flex-direction: column; align-items: center; justify-content: space-between; padding: 1px 0 2px; border: 1px solid #555; border-radius: 4px; background: #868686; }
  .navbar hr { width: 21px; margin: 0; border: 0; border-top: 1px solid #555; }
  .end { align-self: flex-end; margin-right: 2px; }

  .status { display: flex; align-items: center; height: 19px; background: linear-gradient(#f4f4f4, #c4c4c4); color: #111; font-family: Roboto, "Open Sans", sans-serif; }
  .ready { width: 339px; padding-left: 1px; box-sizing: border-box; }
  .toggles { display: flex; align-items: center; gap: 2px; flex: 1; }
  .toggles button { width: 18px; height: 18px; box-sizing: border-box; }
  .toggles .tight { width: 14px; }
  .coords { padding-right: 7px; }
  .need { padding-right: 7px; }
  .num { width: 26px; padding-left: 2px; box-sizing: border-box; }
  footer { display: flex; align-items: center; height: 23px; background: linear-gradient(90deg, #c75a25, #c4512a 60%, #c44f28); color: #fff; box-shadow: inset 0 -1px #8a4a1c; }
  .pinned { display: flex; width: 239px; padding-left: 8px; box-sizing: border-box; gap: 22px; }
  .task { width: 119px; height: 22px; box-sizing: border-box; margin-right: 2px; border: 1px solid #d98a6c; background: #cb6c4b; gap: 3px; justify-content: flex-start; padding-left: 6px; }
  .front { background: #d98a70; border-color: #ecb9a5; }
  .tray { margin-left: auto; display: flex; align-items: center; gap: 7px; }
  .lang { margin-left: 2px; }
  .clock { margin-left: 8px; padding-right: 17px; }
</style>
